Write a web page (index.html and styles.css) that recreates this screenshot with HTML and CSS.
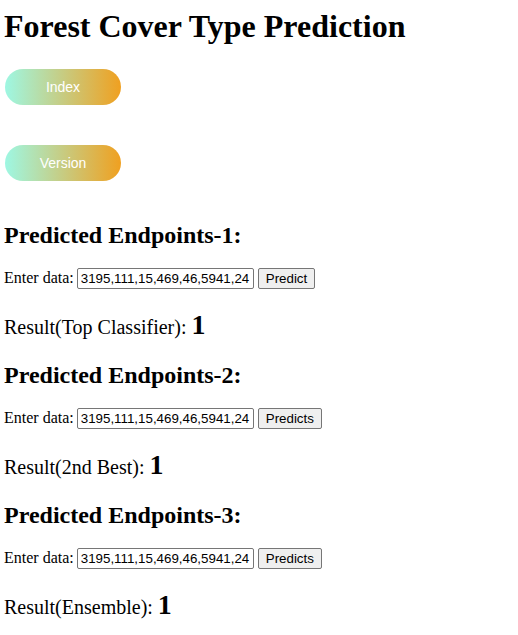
FILE: index.html
```html
<!DOCTYPE html>
<html>
<head>
<meta charset="utf-8">
<link rel="stylesheet" href="styles.css">
</head>
<body>
<h1 class="title">Forest Cover Type Prediction</h1>
<div class="nav">
  <a class="pill">Index</a>
  <a class="pill">Version</a>
</div>
<section class="endpoint">
  <h2 class="ep-title">Predicted Endpoints-1:</h2>
  <form class="ep-form">Enter data: <input class="ep-input" type="text" value="3195,111,15,469,46,5941,24"> <button class="ep-btn" type="button">Predict</button></form>
  <p class="ep-result">Result(Top Classifier): <b class="ep-value">1</b></p>
</section>
<section class="endpoint">
  <h2 class="ep-title">Predicted Endpoints-2:</h2>
  <form class="ep-form">Enter data: <input class="ep-input" type="text" value="3195,111,15,469,46,5941,24"> <button class="ep-btn" type="button">Predicts</button></form>
  <p class="ep-result">Result(2nd Best): <b class="ep-value">1</b></p>
</section>
<section class="endpoint">
  <h2 class="ep-title">Predicted Endpoints-3:</h2>
  <form class="ep-form">Enter data: <input class="ep-input" type="text" value="3195,111,15,469,46,5941,24"> <button class="ep-btn" type="button">Predicts</button></form>
  <p class="ep-result">Result(Ensemble): <b class="ep-value">1</b></p>
</section>
</body>
</html>
```
FILE: styles.css
```css
body {
  margin: 8px 4px;
  font-family: "Liberation Serif", "Times New Roman", serif;
  color: #000;
  background: #fff;
}
.title {
  font-size: 32px;
  margin: 0;
  line-height: 37px;
}
.nav {
  display: flex;
  flex-direction: column;
  gap: 40px;
  margin-top: 24px;
  align-items: flex-start;
}
.pill {
  display: flex;
  align-items: center;
  justify-content: center;
  width: 116px;
  height: 36px;
  margin-left: 1px;
  border-radius: 18px;
  background: linear-gradient(to right, #9ef7e3, #f0a020);
  color: #fff;
  font-family: "Liberation Sans", Arial, sans-serif;
  font-size: 14px;
}
.ep-title {
  font-size: 24px;
  margin: 40px 0 0;
  line-height: 28px;
}
.ep-form {
  margin: 18px 0 0;
  font-size: 16px;
  line-height: 22px;
}
.ep-input {
  box-sizing: border-box;
  width: 177px;
  height: 21px;
  font-family: "Liberation Sans", Arial, sans-serif;
  font-size: 13.33px;
  padding: 1px 3px;
  border: 1px solid #767676;
  border-radius: 2px;
  margin: 0 0 0 -1px;
  vertical-align: baseline;
}
.ep-btn {
  box-sizing: border-box;
  height: 21px;
  font-family: "Liberation Sans", Arial, sans-serif;
  font-size: 13.33px;
  padding: 1px 7px;
  border: 1px solid #767676;
  border-radius: 2px;
  background: #efefef;
  margin: 0 0 0 0;
}
.ep-result {
  margin: 24px 0 0;
  font-size: 20px;
  line-height: 24px;
}
.ep-value {
  font-size: 28px;
  line-height: 24px;
}
.endpoint + .endpoint .ep-title {
  margin-top: 22px;
}
```
